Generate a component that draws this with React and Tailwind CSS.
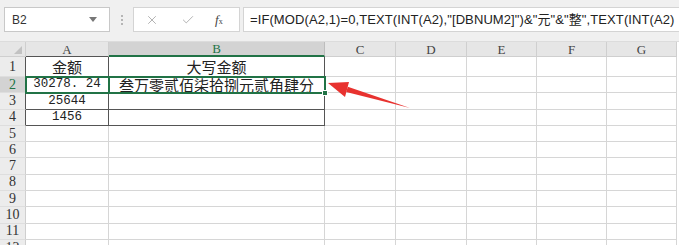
import { X, Check } from 'lucide-react'

const COLS = ['A', 'B', 'C', 'D', 'E', 'F', 'G']
const WIDTHS = ['w-[83px]', 'w-[216px]', 'w-[71px]', 'w-[71px]', 'w-[70px]', 'w-[70px]', 'w-[70px]']

const cellData = {
  1: ['金额', '大写金额'],
  2: ['30278.24', '叁万零贰佰柒拾捌元贰角肆分'],
  3: ['25644', ''],
  4: ['1456', ''],
}

const cjk = "font-['Noto_Sans_CJK_SC',sans-serif]"
const mono = "font-['Liberation_Mono','Noto_Sans_CJK_SC',monospace]"

function Toolbar() {
  return (
    <div className="h-[42px] bg-[#f0f0f0] flex items-start pt-[7px] border-b border-[#dcdcdc]">
      {/* name box */}
      <div className="ml-[4px] w-[106px] h-[25px] bg-white border border-[#c8c8c8] flex items-center justify-between pl-[7px] pr-[12px]">
        <span className="text-[12px] text-[#333] font-['Liberation_Sans',sans-serif]">B2</span>
        <svg width="8" height="5" viewBox="0 0 8 5"><path d="M0 0h8L4 5z" fill="#777" /></svg>
      </div>
      <div className="w-[23px] h-[25px] flex flex-col items-center justify-center gap-[2px]">
        <span className="w-[2px] h-[2px] bg-[#b5b5b5]" />
        <span className="w-[2px] h-[2px] bg-[#b5b5b5]" />
        <span className="w-[2px] h-[2px] bg-[#b5b5b5]" />
      </div>
      {/* cancel / enter / fx */}
      <div className="w-[107px] h-[25px] bg-white border border-[#d4d4d4] flex items-center pl-[11px]">
        <X size={14} strokeWidth={1.5} className="text-[#a8a8a8]" />
        <Check size={14} strokeWidth={1.5} className="text-[#a8a8a8] ml-[22px]" />
        <span className="ml-[20px] text-[13px] italic text-[#444] font-['Liberation_Serif',serif] leading-none">
          f<span className="text-[8px] not-italic">x</span>
        </span>
      </div>
      {/* formula bar */}
      <div className="ml-[3px] flex-1 h-[25px] bg-white border border-[#d4d4d4] border-r-0 flex items-center pl-[6px] overflow-hidden whitespace-nowrap">
        <span className="text-[13px] text-[#222] font-['Liberation_Sans','Noto_Sans_CJK_SC',sans-serif] tracking-[0.1px]">
          =IF(MOD(A2,1)=0,TEXT(INT(A2),"[DBNUM2]")&amp;"元"&amp;"整",TEXT(INT(A2)
        </span>
      </div>
    </div>
  )
}

function HeaderRow() {
  return (
    <div className="flex h-[15px]">
      <div className="w-[26px] bg-[#e6e6e6] border-r border-b border-[#cfcfcf] relative">
        <svg className="absolute right-[3px] bottom-[2px]" width="8" height="8" viewBox="0 0 8 8"><path d="M8 0v8H0z" fill="#c2c2c2" /></svg>
      </div>
      {COLS.map((c, i) => {
        const sel = c === 'B'
        const inTable = c === 'A' || c === 'B'
        return (
          <div
            key={c}
            className={`${WIDTHS[i]} flex items-center justify-center text-[13px] leading-none font-['Liberation_Serif',serif] border-r ${
              sel
                ? 'bg-[#d3d3d3] text-[#217346] border-b-2 border-b-[#217346] border-r-[#bdbdbd]'
                : `bg-[#e6e6e6] text-[#444] border-r-[#cfcfcf] border-b ${inTable ? 'border-b-[#555]' : 'border-b-[#cfcfcf]'}`
            }`}
          >
            {c}
          </div>
        )
      })}
    </div>
  )
}

function Row({ n }) {
  const data = cellData[n]
  const sel = n === 2
  const h = n === 1 ? 'h-[20px]' : 'h-[16.3px]'
  return (
    <div className={`flex ${h}`}>
      <div
        className={`w-[26px] flex items-center justify-center text-[14px] leading-none font-['Liberation_Serif',serif] border-r border-b border-b-[#dedede] ${
          sel ? 'bg-[#d3d3d3] text-[#217346] border-r-[#217346]' : `bg-[#ececec] text-[#333] ${data ? 'border-r-[#555]' : 'border-r-[#cfcfcf]'}`
        }`}
      >
        {n}
      </div>
      {COLS.map((c, i) => {
        const inTable = data && (c === 'A' || c === 'B')
        const text = inTable ? data[i] : ''
        const isNum = /^[0-9.]+$/.test(text)
        return (
          <div
            key={c}
            className={`${WIDTHS[i]} flex items-center justify-center overflow-visible whitespace-nowrap border-r border-b ${
              inTable ? 'border-[#555]' : 'border-[#d6d6d6]'
            } ${isNum ? `${mono} text-[12.5px] text-[#222]` : `${cjk} text-[15px] text-[#222]`} leading-none`}
          >
            {isNum ? text.replace('.', '. ') : text}
          </div>
        )
      })}
    </div>
  )
}

function Arrow() {
  return (
    <svg className="absolute left-0 top-0 pointer-events-none" width="679" height="245" viewBox="0 0 679 245">
      <polygon points="328,83 349,82 345,97" fill="#e8322f" />
      <polygon points="347.8,86.8 346.2,92 410,108" fill="#e8322f" />
    </svg>
  )
}

function Selection() {
  return (
    <>
      <div className="absolute left-[25px] top-[76px] w-[301px] h-[18px] border-2 border-[#217346] pointer-events-none" />
      <div className="absolute left-[108px] top-[76px] w-[2px] h-[18px] bg-[#217346] pointer-events-none" />
      <div className="absolute left-[322px] top-[90px] w-[6px] h-[6px] bg-[#217346] border border-white pointer-events-none" />
    </>
  )
}

export default function App() {
  return (
    <div className="w-[679px] h-[245px] overflow-hidden bg-white relative">
      <Toolbar />
      <HeaderRow />
      {[1, 2, 3, 4, 5, 6, 7, 8, 9, 10, 11, 12].map(n => (
        <Row key={n} n={n} />
      ))}
      <Selection />
      <Arrow />
    </div>
  )
}
